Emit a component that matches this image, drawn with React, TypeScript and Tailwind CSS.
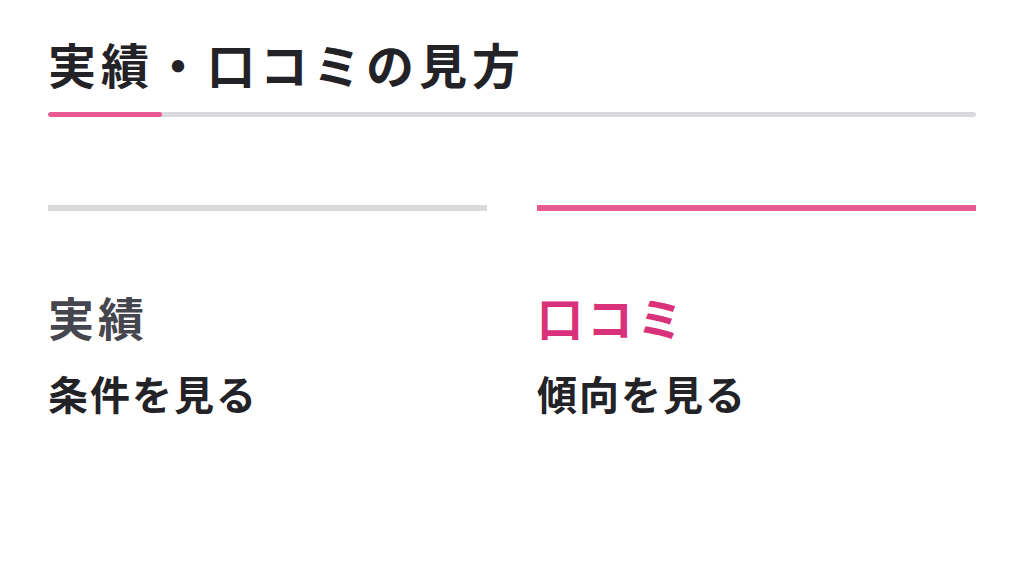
import React from 'react';

const font = { fontFamily: '"Noto Sans CJK JP", "Noto Sans", sans-serif' };

const tabs = [
  { label: '実績', sub: '条件を見る', active: false },
  { label: '口コミ', sub: '傾向を見る', active: true },
];

export default function App() {
  return (
    <div className="min-h-[576px] w-full bg-white px-12 pt-[31px]" style={font}>
      {/* Heading */}
      <h2 className="text-[48px] font-bold leading-[64px] tracking-[5px] text-[#222227]">実績・口コミの見方</h2>
      <div className="mt-[17px] flex h-[5px] w-full overflow-hidden rounded-full bg-[#d9d9de]">
        <div className="h-full w-[114px] rounded-full bg-[#ea5a92]" />
      </div>

      {/* Tabs */}
      <div className="mt-[88px] grid grid-cols-2 gap-[50px]">
        {tabs.map((t) => (
          <div key={t.label}>
            <div className={`h-[6px] w-full ${t.active ? 'bg-[#ea5a92]' : 'bg-[#d9d9de]'}`} />
            <p
              className={`mt-[77px] text-[46px] font-bold leading-[56px] tracking-[4px] ${
                t.active ? 'text-[#d9327a]' : 'text-[#45464e]'
              }`}
            >
              {t.label}
            </p>
            <p className="mt-[25px] text-[40px] font-bold leading-[48px] tracking-[2px] text-[#222227]">{t.sub}</p>
          </div>
        ))}
      </div>
    </div>
  );
}
